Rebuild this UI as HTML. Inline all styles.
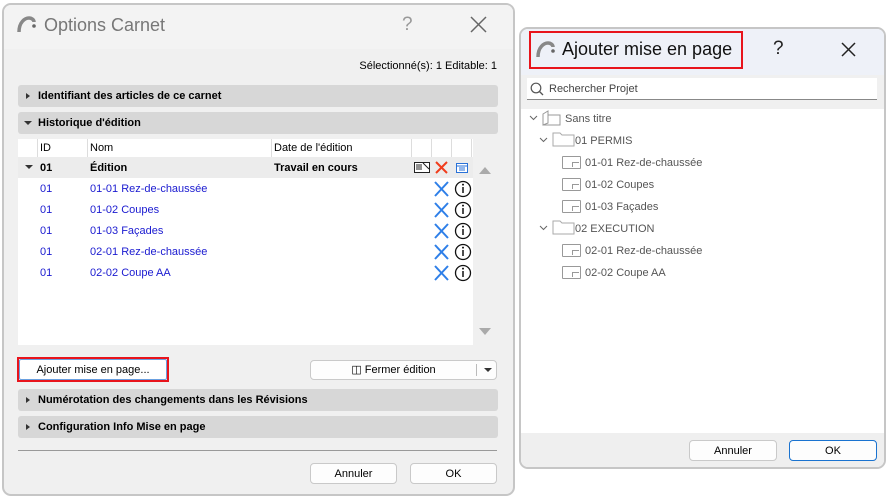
<!DOCTYPE html>
<html><head><meta charset="utf-8"><style>
*{box-sizing:border-box;margin:0;padding:0}
body{width:886px;height:499px;background:#fff;position:relative;overflow:hidden;font-family:"Liberation Sans",sans-serif;font-size:11px;color:#000}
.a{position:absolute}
.bar{position:absolute;left:18px;width:480px;height:22px;background:#d7d7d7;border-radius:3px;font-weight:bold;font-size:11px;line-height:23px;padding-left:20px}
.tri{position:absolute;left:8px;top:8px;width:0;height:0;border-left:4px solid #333;border-top:3px solid transparent;border-bottom:3px solid transparent}
.trd{position:absolute;left:6px;top:9px;width:0;height:0;border-top:4px solid #333;border-left:4px solid transparent;border-right:4px solid transparent}
.btn{position:absolute;background:#fdfdfd;border:1px solid #c9c9c9;border-radius:4px;text-align:center;font-size:11px}
.row{position:absolute;left:18px;width:455px;height:21px;color:#1a1ad0;line-height:23px}
.tree{position:absolute;color:#555;font-size:11px;line-height:14px}
.pg{position:absolute;width:19px;height:13px;border:1px solid #999;border-radius:1px}
.pg:after{content:"";position:absolute;right:1px;bottom:1px;width:6px;height:4px;border-top:1px solid #999;border-left:1px solid #999}
</style></head><body>
<div class="a" style="left:2px;top:3px;width:513px;height:493px;border:2px solid #c6c6c6;border-radius:9px;background:#f0f0f0;overflow:hidden">
 <div class="a" style="left:0;top:0;width:510px;height:44px;background:#f3f3f3"></div>
</div>
<svg class="a" style="left:16px;top:14px" width="22" height="20"><path d="M3 18 C3 8 9 4 13 4 C16 4 18 6 18 8" stroke="#888" stroke-width="3.5" fill="none"/><circle cx="18" cy="12" r="1.8" fill="#666"/></svg>
<div class="a" style="left:44px;top:15px;font-size:18px;color:#777">Options Carnet</div>
<div class="a" style="left:402px;top:14px;font-size:19px;color:#999">?</div>
<svg class="a" style="left:470px;top:16px" width="17" height="17"><path d="M1 1L16 16M16 1L1 16" stroke="#666" stroke-width="1.5"/></svg>
<div class="a" style="left:300px;top:60px;width:197px;text-align:right">Sélectionné(s): 1 Editable: 1</div>
<div class="bar" style="top:85px"><span class="tri"></span>Identifiant des articles de ce carnet</div>
<div class="bar" style="top:112px"><span class="trd"></span>Historique d'édition</div>
<div class="a" style="left:18px;top:139px;width:455px;height:206px;background:#fff"></div>
<div class="a" style="left:37px;top:139px;width:1px;height:18px;background:#ddd"></div>
<div class="a" style="left:87px;top:139px;width:1px;height:18px;background:#ddd"></div>
<div class="a" style="left:271px;top:139px;width:1px;height:18px;background:#ddd"></div>
<div class="a" style="left:411px;top:139px;width:1px;height:18px;background:#ddd"></div>
<div class="a" style="left:431px;top:139px;width:1px;height:18px;background:#ddd"></div>
<div class="a" style="left:451px;top:139px;width:1px;height:18px;background:#ddd"></div>
<div class="a" style="left:471px;top:139px;width:1px;height:18px;background:#ddd"></div>
<div class="a" style="left:40px;top:142px">ID</div>
<div class="a" style="left:90px;top:142px">Nom</div>
<div class="a" style="left:274px;top:142px">Date de l'édition</div>
<div class="a" style="left:18px;top:157px;width:455px;height:21px;background:#ececec;font-weight:bold;line-height:22px">
 <span class="trd" style="left:7px;top:8px"></span>
 <span class="a" style="left:22px">01</span><span class="a" style="left:72px">Édition</span><span class="a" style="left:256px">Travail en cours</span>
</div>
<svg class="a" style="left:414px;top:161px" width="17" height="13"><rect x="0.5" y="1.5" width="15" height="10" fill="#fff" stroke="#222"/><path d="M2 4h6M2 6h6M2 8h6M9 2l6 6" stroke="#222"/></svg>
<svg class="a" style="left:435px;top:161px" width="13" height="13"><path d="M1 1L12 12M12 1L1 12" stroke="#f03c1c" stroke-width="2"/></svg>
<svg class="a" style="left:456px;top:163px" width="12" height="10"><rect x="0.5" y="0.5" width="11" height="9" fill="#fff" stroke="#2a72d8"/><path d="M0 3h12M3 5h6M3 7h6" stroke="#2a72d8"/></svg>
<div class="row" style="top:178px"><span class="a" style="left:22px">01</span><span class="a" style="left:72px">01-01 Rez-de-chaussée</span></div>
<div class="row" style="top:199px"><span class="a" style="left:22px">01</span><span class="a" style="left:72px">01-02 Coupes</span></div>
<div class="row" style="top:220px"><span class="a" style="left:22px">01</span><span class="a" style="left:72px">01-03 Façades</span></div>
<div class="row" style="top:241px"><span class="a" style="left:22px">01</span><span class="a" style="left:72px">02-01 Rez-de-chaussée</span></div>
<div class="row" style="top:262px"><span class="a" style="left:22px">01</span><span class="a" style="left:72px">02-02 Coupe AA</span></div>
<svg class="a" style="left:434px;top:180px" width="40" height="105">
 <g id="r"><path d="M1 2L14 16M14 2L1 16" stroke="#2e7fe8" stroke-width="2"/><circle cx="29" cy="9" r="7.5" fill="none" stroke="#111" stroke-width="1.3"/><path d="M29 7v6" stroke="#111" stroke-width="1.5"/><circle cx="29" cy="4.6" r="1" fill="#111"/></g>
 <use href="#r" y="21"/><use href="#r" y="42"/><use href="#r" y="63"/><use href="#r" y="84"/>
</svg>
<div class="a" style="left:479px;top:167px;border-bottom:7px solid #aaa;border-left:6px solid transparent;border-right:6px solid transparent"></div>
<div class="a" style="left:479px;top:328px;border-top:7px solid #aaa;border-left:6px solid transparent;border-right:6px solid transparent"></div>
<div class="a" style="left:17px;top:357px;width:152px;height:25px;border:2px solid #e8141c;background:#fff"></div>
<div class="a" style="left:19px;top:359px;width:148px;height:21px;border:1px solid #6aa0e0;border-radius:2px;text-align:center;line-height:21px">Ajouter mise en page...</div>
<div class="btn" style="left:310px;top:360px;width:187px;height:20px;line-height:19px"><span style="position:absolute;left:0;width:165px;text-align:center">&#9707;&#xFE0E; Fermer édition</span><span class="a" style="left:165px;top:3px;width:1px;height:12px;background:#bbb"></span><span class="a" style="left:173px;top:7px;border-top:4px solid #333;border-left:4px solid transparent;border-right:4px solid transparent"></span></div>
<div class="bar" style="top:389px"><span class="tri"></span>Numérotation des changements dans les Révisions</div>
<div class="bar" style="top:416px"><span class="tri"></span>Configuration Info Mise en page</div>
<div class="a" style="left:18px;top:450px;width:479px;height:1px;background:#999"></div>
<div class="btn" style="left:310px;top:463px;width:87px;height:21px;line-height:20px">Annuler</div>
<div class="btn" style="left:410px;top:463px;width:87px;height:21px;line-height:20px">OK</div>

<div class="a" style="left:519px;top:27px;width:367px;height:442px;border:2px solid #c6c6c6;border-radius:9px;background:#fff;overflow:hidden">
 <div class="a" style="left:0;top:0;width:365px;height:46px;background:#eef1f8"></div>
 <div class="a" style="left:0;top:46px;width:365px;height:34px;background:#f0f0f0"></div>
 <div class="a" style="left:0;top:404px;width:365px;height:40px;background:#efefef"></div>
</div>
<div class="a" style="left:529px;top:31px;width:214px;height:38px;border:2px solid #e8141c"></div>
<svg class="a" style="left:535px;top:39px" width="22" height="20"><path d="M3 18 C3 8 9 4 13 4 C16 4 18 6 18 8" stroke="#888" stroke-width="3.5" fill="none"/><circle cx="18" cy="12" r="1.8" fill="#666"/></svg>
<div class="a" style="left:562px;top:39px;font-size:18px;color:#111">Ajouter mise en page</div>
<div class="a" style="left:773px;top:38px;font-size:19px;color:#222">?</div>
<svg class="a" style="left:841px;top:42px" width="15" height="15"><path d="M1 1L14 14M14 1L1 14" stroke="#222" stroke-width="1.5"/></svg>
<div class="a" style="left:527px;top:78px;width:350px;height:22px;background:#fff;border-bottom:1px solid #888"></div>
<svg class="a" style="left:530px;top:82px" width="14" height="14"><circle cx="6" cy="6" r="4.8" fill="none" stroke="#555" stroke-width="1.2"/><path d="M9.5 9.5L13 13" stroke="#555" stroke-width="1.3"/></svg>
<div class="a" style="left:549px;top:83px;color:#444">Rechercher Projet</div>
<svg class="a" style="left:527px;top:110px" width="120" height="180" fill="none" stroke="#666">
 <path d="M3 6l3.5 3.5 3.5-3.5M13 28l3.5 3.5 3.5-3.5M13 116l3.5 3.5 3.5-3.5"/>
 <path d="M16 4l5-3v12l-5 2z M21 5h12v10H16" stroke="#999"/>
 <path d="M26 23h7l2 2h12v11H26z" stroke="#aaa"/>
 <path d="M26 111h7l2 2h12v11H26z" stroke="#aaa"/>
</svg>
<div class="pg" style="left:562px;top:156px"></div>
<div class="pg" style="left:562px;top:178px"></div>
<div class="pg" style="left:562px;top:200px"></div>
<div class="pg" style="left:562px;top:244px"></div>
<div class="pg" style="left:562px;top:266px"></div>
<div class="tree" style="left:565px;top:112px">Sans titre</div>
<div class="tree" style="left:575px;top:134px">01 PERMIS</div>
<div class="tree" style="left:585px;top:156px">01-01 Rez-de-chaussée</div>
<div class="tree" style="left:585px;top:178px">01-02 Coupes</div>
<div class="tree" style="left:585px;top:200px">01-03 Façades</div>
<div class="tree" style="left:575px;top:222px">02 EXECUTION</div>
<div class="tree" style="left:585px;top:244px">02-01 Rez-de-chaussée</div>
<div class="tree" style="left:585px;top:266px">02-02 Coupe AA</div>
<div class="btn" style="left:689px;top:440px;width:88px;height:21px;line-height:20px">Annuler</div>
<div class="btn" style="left:789px;top:440px;width:88px;height:21px;line-height:20px;border:1px solid #1a73d0">OK</div>
</body></html>
